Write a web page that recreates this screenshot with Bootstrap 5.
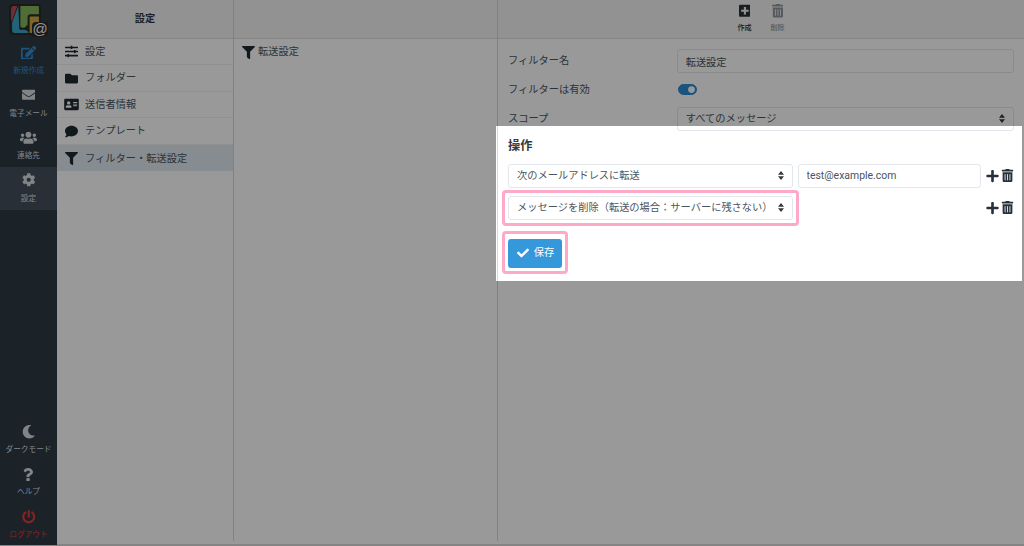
<!DOCTYPE html>
<html lang="ja">
<head>
<meta charset="utf-8">
<title>設定</title>
<link rel="stylesheet" href="https://cdn.jsdelivr.net/npm/bootstrap@5.3.0/dist/css/bootstrap.min.css">
<style>
html,body{height:100%;overflow:hidden}
body{font-family:Roboto,"Noto Sans CJK JP",sans-serif;font-size:10.24px;color:#4a5560;background:#fff}
.shell{height:546px;position:relative;background:linear-gradient(to top,#dcdcdc 1.5px,#fff 1.5px)}
.rail{width:57px;height:545px;background:#2d3a43;color:#dfe3e6}
.logo-box{height:39.5px;padding:4px 0 0 9px}
.logo-wrap{width:39px;height:33px;position:relative}
.logo-at{position:absolute;left:23px;top:18px;width:16px;height:15px;font:15px/14px "Liberation Sans",sans-serif;color:#f2f2f2;text-align:center;background:#2b2b2a;border-radius:4px 0 5px 0}
.rail-item{height:42.6px;display:flex;flex-direction:column;align-items:center;justify-content:flex-start;padding-top:6px;font-size:7.68px;line-height:11px;color:#d8dde0;white-space:nowrap}
.rail-item svg{height:13.5px;width:auto;fill:currentColor;margin-bottom:6px;display:block}
.rail-item.low{padding-top:8px}
.rail-item.low svg{margin-bottom:5px}
.rail-item.is-new{color:#2f8fd6}
.rail-item.is-on{background:#434f5a}
.rail-item.is-out{color:#e33b3b}
.side-col{width:177px;border-right:1px solid #d8d8d8;height:541px;flex:none}
.mid-col{width:264px;border-right:1px solid #d8d8d8;height:541px;flex:none}
.main-col{min-width:0}
.head-bar{height:38.5px;background:#f4f4f4;border-bottom:1px solid #dcdcdc;display:flex;align-items:center;justify-content:center;font-weight:700;color:#33393f}
.entry{display:flex;align-items:center;height:26.6px;padding:1px 0 0 7px;border:0;border-bottom:1px solid #f0f0f0;border-radius:0!important;font-size:10.24px;color:#4a5560;background:transparent;line-height:1}
.entry svg{width:15px;height:13px;margin-right:6px;fill:#1f2a30;flex:none}
.mid-col .entry svg{margin-right:2px}
.entry.is-sel{background:#dfe9f0}
.tool{width:33px;display:flex;flex-direction:column;align-items:center;font-size:7.1px;font-weight:500;line-height:10px;color:#2a3238}
.tool svg{height:13.5px;width:auto;fill:currentColor;margin-top:4px;margin-bottom:5px}
.tool.is-off{color:#8f979d}
.toolbar{height:38.5px;background:#f4f4f4;border-bottom:1px solid #dcdcdc;padding-left:230px}
.sheet{padding:10.5px 10px 0 10px}
.label-cell{font-size:10.24px;color:#4a5560}
.fld{height:24px;font-size:10.24px;padding:0 8px;border:1px solid #e3e6ea;border-radius:3px;color:#4a5560;line-height:22px}
select.fld{padding-right:20px;background-image:url("data:image/svg+xml,%3csvg xmlns='http://www.w3.org/2000/svg' viewBox='0 0 8 12'%3e%3cpath fill='%23343a40' d='M4 0l4 5H0zM4 12L0 7h8z'/%3e%3c/svg%3e");background-size:6px 9px;background-position:right 8px center}
.row-a{height:24px;margin-bottom:5.5px}
.row-b{height:22px;margin-bottom:6px}
.row-a .label-cell{padding-top:4px}
.row-c{height:24px;margin-bottom:1px}
.row-c .label-cell{padding-top:4px}
.toggle{margin:0;padding:0;min-height:0;height:12px;margin-left:1.5px}
.toggle .form-check-input{width:19px;height:11px;margin:0;background-color:#2d8ad4;border-color:#2d8ad4;float:none;display:block}
.sect{font-size:12.2px;font-weight:700;color:#33393f;margin:0;padding-top:6px;height:32px;line-height:16px}
.act-line{height:24px;margin-bottom:8px;gap:5px}
.act-sel{width:285px;flex:none}
.act-inp{width:183px;flex:none;font-size:10.45px;padding-left:7.5px}
.act-tools{gap:2px}
.act-tools .ic-plus{width:13px;height:14px;fill:#27303a;display:block}
.act-tools .ic-bin{width:13px;height:13px;fill:#27303a;display:block}
.ring{border:3px solid #ffa9c9;border-radius:4px;padding:3px;margin:-6px;width:297px;flex:none}
.ring-btn{border:3px solid #ffa9c9;border-radius:4px;padding:5px 3px 3px;margin:11px 0 0 -6px;width:66px}
.go-btn{height:29px;width:54px;padding:0;background:#3498db;border:0;border-radius:3px;font-size:10.24px;color:#fff;display:flex;align-items:center;justify-content:center;gap:4px}
.go-btn svg{width:14px;height:12px;fill:#fff}
.spotlight{position:absolute;left:496px;top:126px;width:526px;height:155px;box-shadow:0 0 0 1600px rgba(0,0,0,.4);pointer-events:none}
</style>
</head>
<body>
<div class="shell d-flex">
  <nav class="rail d-flex flex-column flex-shrink-0">
    <div class="logo-box">
      <div class="logo-wrap">
        <svg width="32" height="31" viewBox="0 0 31 30">
          <rect x="0" y="0" width="31" height="30" rx="4" fill="#2b2b2a"/>
          <path d="M2 5q0-3 3-3h3L3 16H2z" fill="#c04a58"/>
          <path d="M9 2l-6 16v8q0 2 2 2h14q-1-3-5-3H11q-1 0-1-1z" fill="#3aa6c6"/>
          <path d="M11 2h17q1 0 1 1v7h-8q-3 0-3 3v7l-3 3h-2q-2 0-2-2z" fill="#86b45c"/>
          <path d="M20 13q0-1 1-1h8v16h-9z" fill="#d3a83e"/>
        </svg>
        <span class="logo-at">@</span>
      </div>
    </div>
    <a class="rail-item is-new text-decoration-none"><svg viewBox="0 0 576 512"><path d="M402.6 83.2l90.2 90.2c3.8 3.8 3.8 10 0 13.8L274.4 405.6l-92.8 10.3c-12.4 1.4-22.9-9.1-21.5-21.5l10.3-92.8L388.8 83.2c3.8-3.8 10-3.8 13.8 0zm162-22.9l-48.8-48.8c-15.2-15.2-39.9-15.2-55.2 0l-35.4 35.4c-3.8 3.8-3.8 10 0 13.8l90.2 90.2c3.8 3.8 10 3.8 13.8 0l35.4-35.4c15.2-15.3 15.2-40 0-55.2zM384 346.2V448H64V128h229.8c3.2 0 6.2-1.3 8.5-3.5l40-40c7.6-7.6 2.2-20.5-8.5-20.5H48C21.5 64 0 85.5 0 112v352c0 26.5 21.5 48 48 48h352c26.5 0 48-21.5 48-48V306.2c0-10.7-12.9-16-20.5-8.5l-40 40c-2.2 2.3-3.5 5.3-3.5 8.5z"/></svg>新規作成</a>
    <a class="rail-item text-decoration-none"><svg viewBox="0 0 512 512"><path d="M502.3 190.8c3.9-3.1 9.7-.2 9.7 4.7V400c0 26.5-21.5 48-48 48H48c-26.5 0-48-21.5-48-48V195.6c0-5 5.7-7.8 9.7-4.7 22.4 17.4 52.1 39.5 154.1 113.6 21.1 15.4 56.7 47.8 92.2 47.6 35.7.3 72-32.8 92.3-47.6 102-74.1 131.6-96.3 154-113.7zM256 320c23.2.4 56.6-29.2 73.4-41.4 132.7-96.3 142.8-104.7 173.4-128.7 5.8-4.5 9.2-11.5 9.2-18.9v-19c0-26.5-21.5-48-48-48H48C21.5 64 0 85.5 0 112v19c0 7.4 3.4 14.3 9.2 18.9 30.6 23.9 40.7 32.4 173.4 128.7 16.8 12.2 50.2 41.8 73.4 41.4z"/></svg>電子メール</a>
    <a class="rail-item text-decoration-none"><svg viewBox="0 0 640 512"><path d="M96 224c35.3 0 64-28.7 64-64s-28.7-64-64-64-64 28.7-64 64 28.7 64 64 64zm448 0c35.3 0 64-28.7 64-64s-28.7-64-64-64-64 28.7-64 64 28.7 64 64 64zm32 32h-64c-17.6 0-33.5 7.1-45.1 18.6 40.3 22.1 68.9 62 75.1 109.4h66c17.7 0 32-14.3 32-32v-32c0-35.3-28.7-64-64-64zm-256 0c61.9 0 112-50.1 112-112S381.9 32 320 32 208 82.1 208 144s50.1 112 112 112zm76.8 32h-8.3c-20.8 10-43.9 16-68.5 16s-47.6-6-68.5-16h-8.3C179.6 288 128 339.6 128 403.2V432c0 26.5 21.5 48 48 48h288c26.5 0 48-21.5 48-48v-28.8c0-63.6-51.6-115.2-115.2-115.2zm-223.7-13.4C161.5 263.1 145.6 256 128 256H64c-35.3 0-64 28.7-64 64v32c0 17.7 14.3 32 32 32h65.9c6.3-47.4 34.9-87.3 75.2-109.4z"/></svg>連絡先</a>
    <a class="rail-item is-on text-decoration-none"><svg viewBox="0 0 512 512"><path d="M487.4 315.7l-42.6-24.6c4.3-23.2 4.3-47 0-70.2l42.6-24.6c4.9-2.8 7.1-8.6 5.5-14-11.1-35.6-30-67.8-54.7-94.6-3.8-4.1-10-5.1-14.8-2.3L380.8 110c-17.9-15.4-38.5-27.3-60.8-35.1V25.8c0-5.6-3.9-10.5-9.4-11.7-36.7-8.2-74.3-7.8-109.2 0-5.5 1.2-9.4 6.1-9.4 11.7V75c-22.2 7.9-42.8 19.8-60.8 35.1L88.7 85.5c-4.9-2.8-11-1.9-14.8 2.3-24.7 26.7-43.6 58.9-54.7 94.6-1.7 5.4.6 11.2 5.5 14L67.3 221c-4.3 23.2-4.3 47 0 70.2l-42.6 24.6c-4.9 2.8-7.1 8.6-5.5 14 11.1 35.6 30 67.8 54.7 94.6 3.8 4.1 10 5.1 14.8 2.3l42.6-24.6c17.9 15.4 38.5 27.3 60.8 35.1v49.2c0 5.6 3.9 10.5 9.4 11.7 36.7 8.2 74.3 7.8 109.2 0 5.5-1.2 9.4-6.1 9.4-11.7v-49.2c22.2-7.9 42.8-19.8 60.8-35.1l42.6 24.6c4.9 2.8 11 1.9 14.8-2.3 24.7-26.7 43.6-58.9 54.7-94.6 1.5-5.5-.7-11.3-5.6-14.1zM256 336c-44.1 0-80-35.9-80-80s35.9-80 80-80 80 35.9 80 80-35.9 80-80 80z"/></svg>設定</a>
    <div class="mt-auto"></div>
    <a class="rail-item low text-decoration-none"><svg viewBox="0 0 512 512"><path d="M283.211 512c78.962 0 151.079-35.925 198.857-94.792 7.068-8.708-.639-21.43-11.562-19.35-124.203 23.654-238.262-71.576-238.262-196.954 0-72.222 38.662-138.635 101.498-174.394 9.686-5.512 7.25-20.197-3.756-22.23A258.156 258.156 0 0 0 283.211 0c-141.309 0-256 114.511-256 256 0 141.309 114.511 256 256 256z"/></svg>ダークモード</a>
    <a class="rail-item low text-decoration-none"><svg viewBox="0 0 384 512"><path d="M202.021 0C122.202 0 70.503 32.703 29.914 91.026c-7.363 10.58-5.093 25.086 5.178 32.874l43.138 32.709c10.373 7.865 25.132 6.026 33.253-4.148 25.049-31.381 43.63-49.449 82.757-49.449 30.764 0 68.816 19.799 68.816 49.631 0 22.552-18.617 34.134-48.993 51.164-35.423 19.86-82.299 44.576-82.299 106.405V320c0 13.255 10.745 24 24 24h72.471c13.255 0 24-10.745 24-24v-5.773c0-42.86 125.268-44.645 125.268-160.627C377.504 66.256 286.902 0 202.021 0zM192 373.459c-38.196 0-69.271 31.075-69.271 69.271 0 38.195 31.075 69.27 69.271 69.27s69.271-31.075 69.271-69.271-31.075-69.27-69.271-69.27z"/></svg>ヘルプ</a>
    <a class="rail-item low is-out text-decoration-none"><svg viewBox="0 0 512 512"><path d="M400 54.1c63 45 104 118.6 104 201.9 0 136.8-110.8 247.7-247.5 248C120 504.3 8.2 393 8 256.4 7.9 173.1 48.9 99.3 111.8 54.2c11.7-8.3 28-4.8 35 7.7L162.6 90c5.9 10.5 3.1 23.8-6.6 31-41.5 30.8-68 79.6-68 134.9-.1 92.3 74.5 168.1 168 168.1 91.6 0 168.6-74.2 168-169.1-.3-51.8-24.7-101.8-68.1-134-9.7-7.2-12.4-20.5-6.5-30.9l15.8-28.1c7-12.4 23.2-16.1 34.8-7.8zM296 264V24c0-13.3-10.7-24-24-24h-32c-13.3 0-24 10.7-24 24v240c0 13.3 10.7 24 24 24h32c13.3 0 24-10.7 24-24z"/></svg>ログアウト</a>
  </nav>

  <section class="side-col">
    <div class="head-bar">設定</div>
    <div class="list-group list-group-flush">
      <a class="list-group-item entry"><svg viewBox="0 0 512 512"><path d="M496 384H160v-16c0-8.8-7.2-16-16-16h-32c-8.8 0-16 7.2-16 16v16H16c-8.8 0-16 7.2-16 16v32c0 8.8 7.2 16 16 16h80v16c0 8.8 7.2 16 16 16h32c8.8 0 16-7.2 16-16v-16h336c8.8 0 16-7.2 16-16v-32c0-8.8-7.2-16-16-16zm0-160h-80v-16c0-8.8-7.2-16-16-16h-32c-8.8 0-16 7.2-16 16v16H16c-8.8 0-16 7.2-16 16v32c0 8.8 7.2 16 16 16h336v16c0 8.8 7.2 16 16 16h32c8.8 0 16-7.2 16-16v-16h80c8.8 0 16-7.2 16-16v-32c0-8.8-7.2-16-16-16zm0-160H288V48c0-8.8-7.2-16-16-16h-32c-8.8 0-16 7.2-16 16v16H16C7.2 64 0 71.2 0 80v32c0 8.8 7.2 16 16 16h208v16c0 8.8 7.2 16 16 16h32c8.8 0 16-7.2 16-16v-16h208c8.8 0 16-7.2 16-16V80c0-8.8-7.2-16-16-16z"/></svg>設定</a>
      <a class="list-group-item entry"><svg viewBox="0 0 512 512"><path d="M464 128H272l-64-64H48C21.49 64 0 85.49 0 112v288c0 26.51 21.49 48 48 48h416c26.51 0 48-21.49 48-48V176c0-26.51-21.49-48-48-48z"/></svg>フォルダー</a>
      <a class="list-group-item entry"><svg viewBox="0 0 576 512"><path d="M528 32H48C21.5 32 0 53.5 0 80v352c0 26.5 21.5 48 48 48h480c26.5 0 48-21.5 48-48V80c0-26.5-21.5-48-48-48zm-352 96c35.3 0 64 28.7 64 64s-28.7 64-64 64-64-28.7-64-64 28.7-64 64-64zm112 236.8c0 10.6-10 19.2-22.4 19.2H86.4C74 384 64 375.4 64 364.8v-19.2c0-31.8 30.1-57.6 67.2-57.6h5c12.3 5.1 25.7 8 39.8 8s27.6-2.9 39.8-8h5c37.1 0 67.2 25.8 67.2 57.6v19.2zM512 312c0 4.4-3.6 8-8 8H360c-4.4 0-8-3.6-8-8v-16c0-4.4 3.6-8 8-8h144c4.4 0 8 3.6 8 8v16zm0-64c0 4.4-3.6 8-8 8H360c-4.4 0-8-3.6-8-8v-16c0-4.4 3.6-8 8-8h144c4.4 0 8 3.6 8 8v16zm0-64c0 4.4-3.6 8-8 8H360c-4.4 0-8-3.6-8-8v-16c0-4.4 3.6-8 8-8h144c4.4 0 8 3.6 8 8v16z"/></svg>送信者情報</a>
      <a class="list-group-item entry"><svg viewBox="0 0 512 512"><path d="M256 32C114.6 32 0 125.1 0 240c0 49.6 21.4 95 57 130.7C44.5 421.1 2.7 466 2.2 466.5c-2.2 2.3-2.8 5.7-1.5 8.7S4.8 480 8 480c66.3 0 116-31.8 140.6-51.4 32.7 12.3 69 19.4 107.4 19.4 141.4 0 256-93.1 256-208S397.4 32 256 32z"/></svg>テンプレート</a>
      <a class="list-group-item entry is-sel"><svg viewBox="0 0 512 512"><path d="M487.976 0H24.028C2.71 0-8.047 25.866 7.058 40.971L192 225.941V432c0 7.831 3.821 15.17 10.237 19.662l80 55.98C298.02 518.69 320 507.493 320 487.98V225.941l184.947-184.97C520.021 25.896 509.338 0 487.976 0z"/></svg>フィルター・転送設定</a>
    </div>
  </section>

  <section class="mid-col">
    <div class="head-bar"></div>
    <div class="list-group list-group-flush">
      <a class="list-group-item entry"><svg viewBox="0 0 512 512"><path d="M487.976 0H24.028C2.71 0-8.047 25.866 7.058 40.971L192 225.941V432c0 7.831 3.821 15.17 10.237 19.662l80 55.98C298.02 518.69 320 507.493 320 487.98V225.941l184.947-184.97C520.021 25.896 509.338 0 487.976 0z"/></svg>転送設定</a>
    </div>
  </section>

  <main class="flex-grow-1 main-col">
    <div class="toolbar d-flex">
      <a class="tool text-decoration-none"><svg viewBox="0 0 448 512"><path d="M400 32H48C21.5 32 0 53.5 0 80v352c0 26.5 21.5 48 48 48h352c26.5 0 48-21.5 48-48V80c0-26.5-21.5-48-48-48zm-32 252c0 6.6-5.4 12-12 12h-92v92c0 6.6-5.4 12-12 12h-56c-6.6 0-12-5.4-12-12v-92H92c-6.6 0-12-5.4-12-12v-56c0-6.6 5.4-12 12-12h92v-92c0-6.6 5.4-12 12-12h56c6.6 0 12 5.4 12 12v92h92c6.6 0 12 5.4 12 12v56z"/></svg>作成</a>
      <a class="tool is-off text-decoration-none"><svg viewBox="0 0 448 512"><path d="M32 464a48 48 0 0 0 48 48h288a48 48 0 0 0 48-48V128H32zm272-256a16 16 0 0 1 32 0v224a16 16 0 0 1-32 0zm-96 0a16 16 0 0 1 32 0v224a16 16 0 0 1-32 0zm-96 0a16 16 0 0 1 32 0v224a16 16 0 0 1-32 0zM432 32H312l-9.4-18.7A24 24 0 0 0 281.1 0H166.8a23.72 23.72 0 0 0-21.4 13.3L136 32H16A16 16 0 0 0 0 48v32a16 16 0 0 0 16 16h416a16 16 0 0 0 16-16V48a16 16 0 0 0-16-16z"/></svg>削除</a>
    </div>
    <form class="sheet">
      <div class="row g-0 row-a">
        <div class="col-4 label-cell">フィルター名</div>
        <div class="col-8"><input class="form-control fld" value="転送設定"></div>
      </div>
      <div class="row g-0 row-b align-items-center">
        <div class="col-4 label-cell">フィルターは有効</div>
        <div class="col-8"><div class="form-check form-switch toggle"><input class="form-check-input" type="checkbox" checked></div></div>
      </div>
      <div class="row g-0 row-c">
        <div class="col-4 label-cell">スコープ</div>
        <div class="col-8"><select class="form-select fld"><option>すべてのメッセージ</option></select></div>
      </div>
      <h2 class="sect">操作</h2>
      <div class="d-flex align-items-center act-line">
        <select class="form-select fld act-sel"><option>次のメールアドレスに転送</option></select>
        <input class="form-control fld act-inp" value="test@example.com">
        <div class="d-flex align-items-center act-tools">
          <svg class="ic-plus" viewBox="0 0 448 512"><path d="M416 208H272V64c0-17.67-14.33-32-32-32h-32c-17.67 0-32 14.33-32 32v144H32c-17.67 0-32 14.33-32 32v32c0 17.67 14.33 32 32 32h144v144c0 17.67 14.33 32 32 32h32c17.67 0 32-14.33 32-32V304h144c17.67 0 32-14.33 32-32v-32c0-17.67-14.33-32-32-32z"/></svg>
          <svg class="ic-bin" viewBox="0 0 448 512"><path d="M32 464a48 48 0 0 0 48 48h288a48 48 0 0 0 48-48V128H32zm272-256a16 16 0 0 1 32 0v224a16 16 0 0 1-32 0zm-96 0a16 16 0 0 1 32 0v224a16 16 0 0 1-32 0zm-96 0a16 16 0 0 1 32 0v224a16 16 0 0 1-32 0zM432 32H312l-9.4-18.7A24 24 0 0 0 281.1 0H166.8a23.72 23.72 0 0 0-21.4 13.3L136 32H16A16 16 0 0 0 0 48v32a16 16 0 0 0 16 16h416a16 16 0 0 0 16-16V48a16 16 0 0 0-16-16z"/></svg>
        </div>
      </div>
      <div class="d-flex align-items-center act-line">
        <div class="ring"><select class="form-select fld"><option>メッセージを削除（転送の場合：サーバーに残さない）</option></select></div>
        <div class="act-inp"></div>
        <div class="d-flex align-items-center act-tools">
          <svg class="ic-plus" viewBox="0 0 448 512"><path d="M416 208H272V64c0-17.67-14.33-32-32-32h-32c-17.67 0-32 14.33-32 32v144H32c-17.67 0-32 14.33-32 32v32c0 17.67 14.33 32 32 32h144v144c0 17.67 14.33 32 32 32h32c17.67 0 32-14.33 32-32V304h144c17.67 0 32-14.33 32-32v-32c0-17.67-14.33-32-32-32z"/></svg>
          <svg class="ic-bin" viewBox="0 0 448 512"><path d="M32 464a48 48 0 0 0 48 48h288a48 48 0 0 0 48-48V128H32zm272-256a16 16 0 0 1 32 0v224a16 16 0 0 1-32 0zm-96 0a16 16 0 0 1 32 0v224a16 16 0 0 1-32 0zm-96 0a16 16 0 0 1 32 0v224a16 16 0 0 1-32 0zM432 32H312l-9.4-18.7A24 24 0 0 0 281.1 0H166.8a23.72 23.72 0 0 0-21.4 13.3L136 32H16A16 16 0 0 0 0 48v32a16 16 0 0 0 16 16h416a16 16 0 0 0 16-16V48a16 16 0 0 0-16-16z"/></svg>
        </div>
      </div>
      <div class="ring-btn">
        <button type="button" class="btn btn-primary go-btn"><svg viewBox="0 0 512 512"><path d="M173.898 439.404l-166.4-166.4c-9.997-9.997-9.997-26.206 0-36.204l36.203-36.204c9.997-9.998 26.207-9.998 36.204 0L192 312.69 432.095 72.596c9.997-9.997 26.207-9.997 36.204 0l36.203 36.204c9.997 9.997 9.997 26.206 0 36.204l-294.4 294.401c-9.998 9.997-26.207 9.997-36.204-.001z"/></svg>保存</button>
      </div>
    </form>
  </main>
  <div class="spotlight"></div>
</div>
<script src="https://cdn.jsdelivr.net/npm/bootstrap@5.3.0/dist/js/bootstrap.bundle.min.js"></script>
</body>
</html>
